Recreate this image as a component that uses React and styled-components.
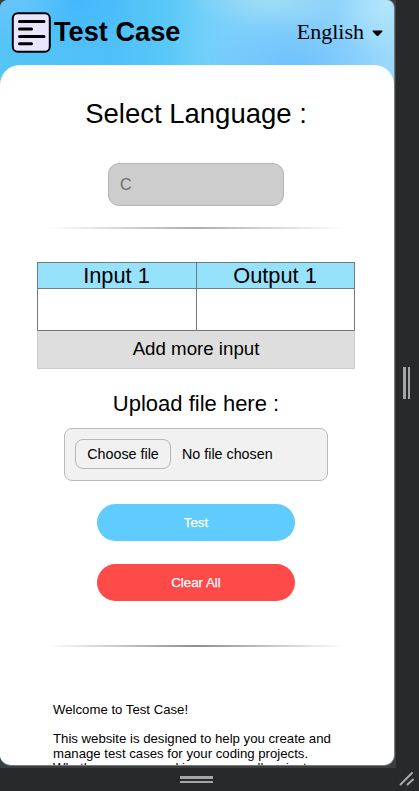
import React from "react";
import styled, { createGlobalStyle } from "styled-components";

const GlobalStyle = createGlobalStyle`
  * { box-sizing: border-box; }
  html, body { margin: 0; padding: 0; }
  body { background: #28292b; overflow: hidden; }
`;

const Frame = styled.div`
  display: grid;
  grid-template-columns: 396px 23px;
  grid-template-rows: 768px 23px;
  width: 419px;
  height: 791px;
  background: #28292b;
  font-family: "Liberation Sans", Arial, sans-serif;
  color: #000;
`;

const Viewport = styled.div`
  background: #3c3d3e;
  overflow: hidden;
`;

const Screen = styled.div`
  width: 395px;
  height: 766px;
  overflow: hidden;
  border-right: 1px solid #77797a;
  border-bottom: 1px solid #77797a;
  border-radius: 8px 8px 11px 11px;
  background:
    radial-gradient(ellipse 70px 40px at 5px 0px, #69c5fb 0%, #69c5fb00 100%),
    radial-gradient(ellipse 60px 50px at 75px 0px, #42b8fd 0%, #42b8fd00 100%),
    radial-gradient(ellipse 90px 50px at 290px 65px, #6fc2fd 0%, #6fc2fd00 100%),
    radial-gradient(ellipse 80px 30px at 270px 0px, #9edcf5 0%, #9edcf500 100%),
    radial-gradient(ellipse 50px 50px at 385px 5px, #b2e5fb 0%, #b2e5fb00 100%),
    linear-gradient(90deg, #55c5f5 0%, #4fbffa 28%, #58c8f7 42%, #72cffa 52%, #82d0fb 65%, #89d0fb 82%, #9bd9fc 100%);
`;

const Header = styled.header`
  display: flex;
  align-items: center;
  justify-content: space-between;
  height: 65px;
  padding: 0 11px 0 11px;
`;

const Brand = styled.div`
  display: flex;
  align-items: center;
  gap: 3px;
  svg { display: block; }
`;

const BrandName = styled.h1`
  margin: 0;
  padding-bottom: 2px;
  font-size: 27.2px;
  line-height: 32px;
  font-weight: 700;
`;

const LanguageMenu = styled.div`
  display: flex;
  align-items: center;
  gap: 8px;
  padding-bottom: 2px;
  font: 22px/30px "Liberation Serif", "Times New Roman", serif;
  svg { display: block; margin-top: 4px; }
`;

const Sheet = styled.main`
  display: flex;
  flex-direction: column;
  align-items: center;
  width: 394px;
  height: 720px;
  padding: 33px 2px 0 0;
  border-radius: 20px 20px 0 0;
  background: #fff;
  > * { flex-shrink: 0; }
`;

const Heading = styled.h2`
  margin: ${(p) => p.$top || 0}px 0 0;
  font-size: ${(p) => p.$size}px;
  line-height: 32px;
  font-weight: 400;
  white-space: nowrap;
`;

const LanguageField = styled.div`
  width: 176px;
  height: 43px;
  margin-top: 33px;
  padding-left: 11px;
  border: 1px solid #b4b4b4;
  border-radius: 11px;
  background: #cdcdcd;
  color: #6c6c6c;
  font-size: 16px;
  line-height: 41px;
`;

const Divider = styled.div`
  width: 300px;
  height: 2px;
  margin-top: ${(p) => p.$top}px;
  background: linear-gradient(90deg, #fff0, ${(p) => p.$color}, #fff0);
`;

const Cases = styled.div`
  display: grid;
  grid-template-columns: 160px 158px;
  grid-template-rows: 27px 42px 38px;
  width: 318px;
  margin-top: 33px;
`;

const CaseTitle = styled.div`
  padding-right: 1px;
  border: solid #6e7d82;
  border-width: 1px 1px 1px ${(p) => (p.$first ? 1 : 0)}px;
  background: #96e2fa;
  font-size: 21.8px;
  line-height: 25px;
  text-align: center;
`;

const CaseCell = styled.div`
  border: solid #777;
  border-width: 0 1px 1px ${(p) => (p.$first ? 1 : 0)}px;
  background: #fff;
`;

const AddButton = styled.div`
  grid-column: 1 / 3;
  border: 1px solid #cbcbcb;
  border-top: 0;
  background: #dedede;
  font-size: 18.7px;
  line-height: 35px;
  text-align: center;
`;

const FilePicker = styled.div`
  display: flex;
  align-items: center;
  width: 264px;
  height: 53px;
  margin-top: 8px;
  padding: 0 0 1px 10px;
  gap: 11px;
  border: 1px solid #bababa;
  border-radius: 8px;
  background: #f1f1f1;
  font-size: 14.3px;
`;

const ChooseButton = styled.div`
  width: 96px;
  height: 30px;
  border: 1px solid #b7b7b7;
  border-radius: 8px;
  line-height: 28px;
  text-align: center;
`;

const ActionButton = styled.div`
  width: 198px;
  height: 37px;
  margin-top: ${(p) => p.$top}px;
  border-radius: 19px;
  background: ${(p) => p.$color};
  color: #fff;
  font-size: 13.3px;
  line-height: 37px;
  text-align: center;
  -webkit-text-stroke: 0.25px #fff;
`;

const Intro = styled.div`
  align-self: stretch;
  margin: 56px 30px 0 53px;
  font-size: 13.19px;
  line-height: 14.6px;
  white-space: nowrap;
  p { margin: 0 0 14.4px; }
`;

const SideRail = styled.div`
  display: flex;
  align-items: center;
  justify-content: center;
  gap: 2px;
  padding: 0 2px 2px 0;
`;

const BottomRail = styled.div`
  display: flex;
  flex-direction: column;
  align-items: center;
  justify-content: center;
  gap: 2px;
  padding-right: 4px;
`;

const Grip = styled.i`
  width: ${(p) => (p.$vertical ? 2.5 : 33)}px;
  height: ${(p) => (p.$vertical ? 32 : 2.5)}px;
  background: #a6a6a6;
`;

const Corner = styled.div`
  display: flex;
  svg { display: block; }
`;

export default function App() {
  return (
    <>
      <GlobalStyle />
      <Frame>
        <Viewport>
          <Screen>
            <Header>
              <Brand>
                <svg width="40" height="41" viewBox="0 0 40 41">
                  <rect x="1.8" y="1.3" width="37" height="38.4" rx="5" fill="#e8e5fd" stroke="#000" strokeWidth="2" />
                  <path d="M8.5 9.5H33M8.5 17H20.5M8.5 24.5H33M8.5 31.8H20.5" stroke="#000" strokeWidth="3" strokeLinecap="round" />
                </svg>
                <BrandName>Test Case</BrandName>
              </Brand>
              <LanguageMenu>
                English
                <svg width="11" height="7" viewBox="0 0 11 7"><path d="M1 .5H10Q11 .7 10.2 1.7L6.4 5.8Q5.5 6.7 4.6 5.8L.8 1.7Q0 .7 1 .5Z" /></svg>
              </LanguageMenu>
            </Header>
            <Sheet>
              <Heading $size={27.5}>Select Language :</Heading>
              <LanguageField>C</LanguageField>
              <Divider $top={21} $color="#adadad" />
              <Cases>
                <CaseTitle $first>Input 1</CaseTitle>
                <CaseTitle>Output 1</CaseTitle>
                <CaseCell $first />
                <CaseCell />
                <AddButton>Add more input</AddButton>
              </Cases>
              <Heading $size={22} $top={19}>Upload file here :</Heading>
              <FilePicker>
                <ChooseButton>Choose file</ChooseButton>
                <span>No file chosen</span>
              </FilePicker>
              <ActionButton $top={23} $color="#5fcbff">Test</ActionButton>
              <ActionButton $top={23} $color="#ff4a4a">Clear All</ActionButton>
              <Divider $top={44} $color="#8e8e8e" />
              <Intro>
                <p>Welcome to Test Case!</p>
                <p>
                  This website is designed to help you create and<br />
                  manage test cases for your coding projects.<br />
                  Whether you are working on a small project
                </p>
              </Intro>
            </Sheet>
          </Screen>
        </Viewport>
        <SideRail>
          <Grip $vertical />
          <Grip $vertical />
        </SideRail>
        <BottomRail>
          <Grip />
          <Grip />
        </BottomRail>
        <Corner>
          <svg width="23" height="23" viewBox="0 0 23 23">
            <path d="M4.5 16.5L16 5M11.5 16.5L17 11.5" stroke="#aaa" strokeWidth="2" strokeLinecap="round" />
          </svg>
        </Corner>
      </Frame>
    </>
  );
}
